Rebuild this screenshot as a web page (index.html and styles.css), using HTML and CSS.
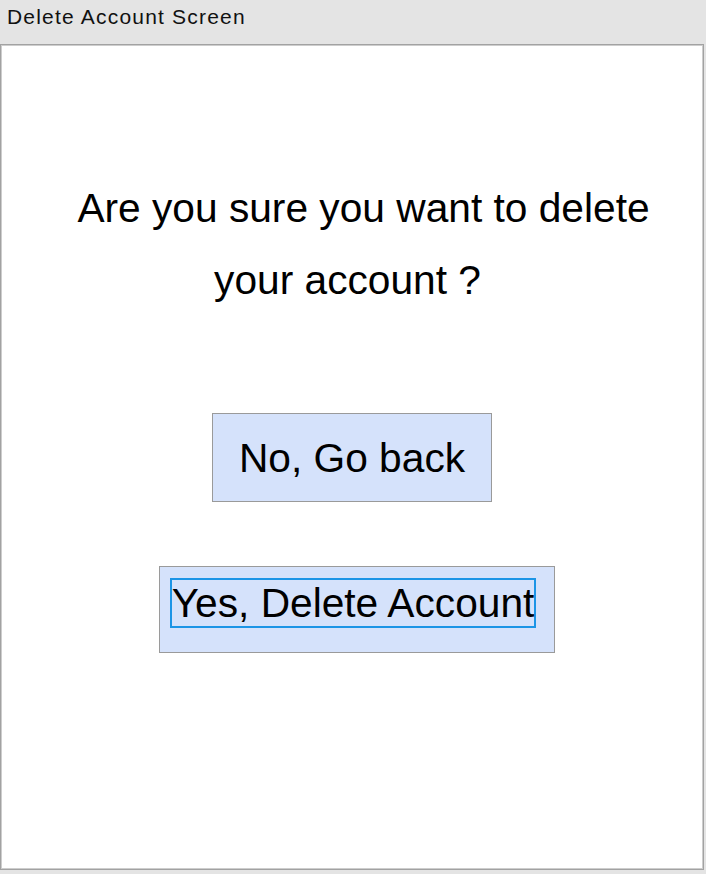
FILE: index.html
```html
<!DOCTYPE html>
<html lang="en">
<head>
<meta charset="utf-8">
<title>Delete Account Screen</title>
<link rel="stylesheet" href="styles.css">
</head>
<body>
<div class="window">
  <div class="titlebar">Delete Account Screen</div>
  <div class="frame">
    <div class="question">
      <div class="line line-1">Are you sure you want to delete</div>
      <div class="line line-2">your account ?</div>
    </div>
    <div class="btn btn-back">No, Go back</div>
    <div class="btn btn-delete"><span class="focus">Yes, Delete Account</span></div>
  </div>
</div>
</body>
</html>
```
FILE: styles.css
```css
html, body {
  margin: 0;
  padding: 0;
  background: #e4e4e4;
}
body {
  width: 706px;
  height: 874px;
  overflow: hidden;
  font-family: "Liberation Sans", Arial, sans-serif;
  color: #000;
}
.window {
  display: flex;
  flex-direction: column;
}
.titlebar {
  height: 44px;
  box-sizing: border-box;
  padding-left: 7px;
  font-size: 21px;
  line-height: 33px;
  letter-spacing: 1.2px;
  color: #111;
}
.frame {
  width: 704px;
  height: 826px;
  box-sizing: border-box;
  background: #fff;
  border: 1px solid #a2a2a2;
  box-shadow: inset 0 0 0 1px #cdcdcd;
  display: flex;
  flex-direction: column;
  align-items: center;
  padding-top: 127px;
}
.question {
  font-size: 40.7px;
  line-height: 72px;
  text-align: center;
  align-self: stretch;
}
.line-1 {
  padding-left: 23px;
}
.line-2 {
  padding-right: 9px;
}
.btn {
  background: #d5e2fb;
  border: 1px solid #9a9a9a;
  font-size: 40.7px;
  line-height: 46px;
  white-space: nowrap;
}
.btn-back {
  margin-top: 97px;
  padding: 21px 26px 20px 26px;
}
.btn-delete {
  margin-top: 64px;
  padding: 11px 18px 24px 10px;
  margin-left: 10px;
}
.focus {
  display: inline-block;
  border: 2px solid #1c95e6;
  vertical-align: top;
}
```
